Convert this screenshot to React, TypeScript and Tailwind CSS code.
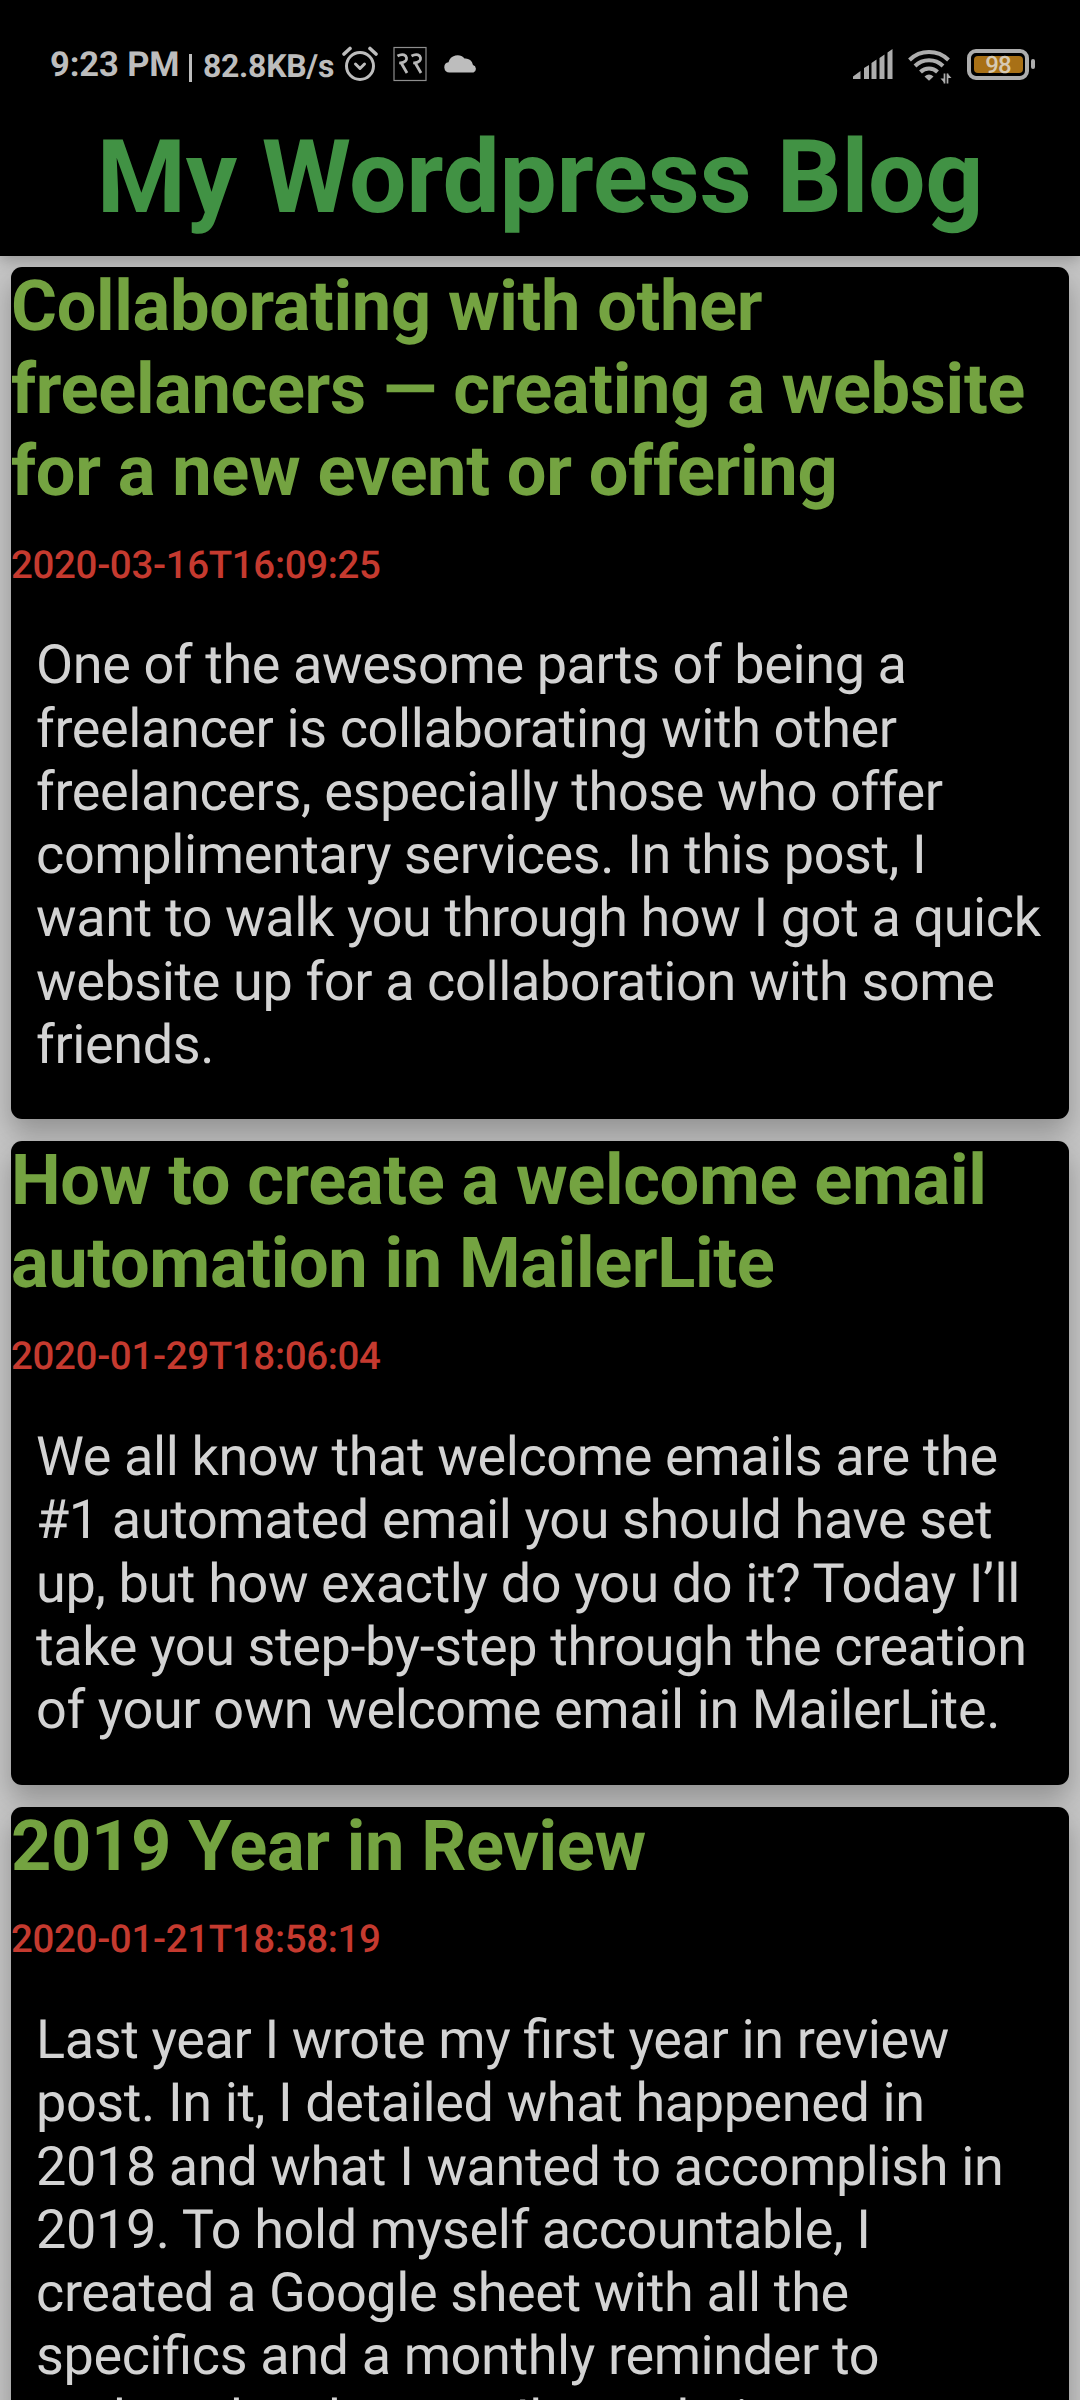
const posts = [
  {
    title: ['Collaborating with other', 'freelancers — creating a website', 'for a new event or offering'],
    date: '2020-03-16T16:09:25',
    body: [
      'One of the awesome parts of being a',
      'freelancer is collaborating with other',
      'freelancers, especially those who offer',
      'complimentary services. In this post, I',
      'want to walk you through how I got a quick',
      'website up for a collaboration with some',
      'friends.',
    ],
  },
  {
    title: ['How to create a welcome email', 'automation in MailerLite'],
    date: '2020-01-29T18:06:04',
    body: [
      'We all know that welcome emails are the',
      '#1 automated email you should have set',
      'up, but how exactly do you do it? Today I’ll',
      'take you step-by-step through the creation',
      'of your own welcome email in MailerLite.',
    ],
  },
  {
    title: ['2019 Year in Review'],
    date: '2020-01-21T18:58:19',
    body: [
      'Last year I wrote my first year in review',
      'post. In it, I detailed what happened in',
      '2018 and what I wanted to accomplish in',
      '2019. To hold myself accountable, I',
      'created a Google sheet with all the',
      'specifics and a monthly reminder to',
      'update the sheet so I’m updating',
    ],
  },
];

function Lines({ lines }: { lines: string[] }) {
  return (
    <>
      {lines.map((line) => (
        <span key={line} className="block whitespace-nowrap">
          {line}
        </span>
      ))}
    </>
  );
}

function AlarmIcon() {
  return (
    <svg className="ml-[8px] h-[36px] w-[36px]" viewBox="0 0 36 36" fill="none" stroke="#bdbdbd" strokeWidth="3" strokeLinecap="round" strokeLinejoin="round">
      <circle cx="18" cy="20" r="13.5" />
      <path d="M13.5 18l4.5 4.5 4.5-4.5" />
      <path d="M2 8l6-5.5M34 8l-6-5.500" strokeWidth="3.6" />
    </svg>
  );
}

function RaRaIcon() {
  return (
    <svg className="ml-[15px] h-[36px] w-[34px]" viewBox="0 0 34 36" fill="none" stroke="#b8b8b8">
      <rect x="1" y="1.5" width="32" height="33" strokeWidth="1.2" stroke="#8e8e8e" />
      <path d="M4.500 10q3.500-2 6.500-1.200c3 1 3.200 4.500 1.500 6.200-1.800 1.800-4 2-6.300 1.800M8.500 17.500l5.500 9.500" strokeWidth="2.800" />
      <path d="M18.500 10q3.500-2 6.500-1.200c3 1 3.200 4.500 1.500 6.200-1.800 1.800-4 2-6.300 1.800M22.500 17.500l5.500 9.500" strokeWidth="2.800" />
    </svg>
  );
}

function CloudIcon() {
  return (
    <svg className="mt-[-2px] ml-[17px] h-[20px] w-[34px]" viewBox="0 0 34 20" fill="#bdbdbd">
      <path d="M5.500 19.500a5.200 5.200 0 0 1-1-10.300A9.300 9.300 0 0 1 20.500 5.500a7.500 7.500 0 0 1 8.500 6.500A4 4 0 0 1 29.500 19.500z" />
    </svg>
  );
}

function SignalIcon() {
  return (
    <svg className="mt-[-1px] h-[30px] w-[40px]" viewBox="0 0 40 30" fill="#adadad">
      <path d="M0 30v-2.500l7.500-5.500v8zM11 30v-11l5-3v14zM18.500 30v-16l5-3.500v19.500zM26.500 30v-21l5-3.500v24.500zM34.500 30v-26.500l5-3.500v30z" />
    </svg>
  );
}

function WifiIcon() {
  return (
    <svg className="mt-[3px] ml-[15px] h-[36px] w-[44px]" viewBox="0 0 44 36" fill="none" stroke="#adadad" strokeWidth="4">
      <path d="M1.500 12a28 28 0 0 1 39 0M7 18a20 20 0 0 1 28 0M12.500 24a12 12 0 0 1 17 0" />
      <path d="M16.500 28.500q4.500-4 9 0l-4.500 4.200z" fill="#adadad" stroke="none" />
      <path d="M36.500 25.500v10M39.500 35.500v-10" strokeWidth="1.700" />
      <path d="M32.500 30.500h4v4.500zM43.500 30h-4v-4.500z" fill="#adadad" stroke="none" />
    </svg>
  );
}

function Battery() {
  return (
    <div className="ml-[15px] flex items-center">
      <div className="flex h-[31px] w-[62px] items-center justify-center rounded-[9px] border-4 border-[#adadad]">
        <div className="flex h-[17px] w-[49px] items-center justify-center rounded-[4px] bg-[#a87016]">
          <span className="pt-[2px] text-[24px] leading-none font-medium tracking-[-1px] text-[#d6c9b2]">98</span>
        </div>
      </div>
      <div className="ml-[2px] h-[10px] w-[4px] rounded-[2px] bg-[#adadad]" />
    </div>
  );
}

function StatusBar() {
  return (
    <div className="flex h-[128px] items-center justify-between pr-[45px] pl-[50px] text-[#bdbdbd]">
      <div className="flex items-center">
        <span className="w-[139px] pt-[3px] text-[34.5px] leading-none font-bold tracking-[-0.1px] whitespace-pre">9:23 PM</span>
        <span className="mt-[7px] h-[28px] w-[3px] bg-[#bdbdbd]" />
        <span className="w-[142px] pt-[3px] pl-[11px] text-[32px] leading-none font-bold tracking-[-0.3px]">82.8KB/s</span>
        <AlarmIcon />
        <RaRaIcon />
        <CloudIcon />
      </div>
      <div className="flex items-center">
        <SignalIcon />
        <WifiIcon />
        <Battery />
      </div>
    </div>
  );
}

export default function App() {
  return (
    <div className="h-[2400px] w-[1080px] overflow-hidden bg-[#c6c6c6] font-[Roboto,sans-serif] [font-feature-settings:'liga'_1] [text-rendering:geometricPrecision]">
      <header className="relative h-[256px] bg-black shadow-[0_4px_14px_rgba(0,0,0,0.25)]">
        <StatusBar />
        <h1 className="-mt-[11px] text-center text-[102px] leading-[120px] font-bold tracking-[-0.32px] whitespace-nowrap text-[#419244]">My Wordpress Blog</h1>
      </header>
      <main className="flex flex-col gap-[22px] px-[11px] pt-[11px]">
        {posts.map((post) => (
          <article key={post.date} className="flow-root rounded-[11px] bg-black shadow-[0_14px_28px_rgba(0,0,0,0.27)]">
            <h2 className="-mt-[1px] text-[70.4px] leading-[82.5px] font-bold tracking-[-0.36px] text-[#74a341]">
              <Lines lines={post.title} />
            </h2>
            <p className="mt-[29px] text-[38.5px] leading-[45px] font-medium tracking-[-0.35px] text-[#c53a2f]">{post.date}</p>
            <p className="px-[25px] pt-[46.8px] pb-[42px] text-[54px] leading-[63.3px] tracking-[-0.39px] text-[#d3d3d3]">
              <Lines lines={post.body} />
            </p>
          </article>
        ))}
      </main>
    </div>
  );
}
